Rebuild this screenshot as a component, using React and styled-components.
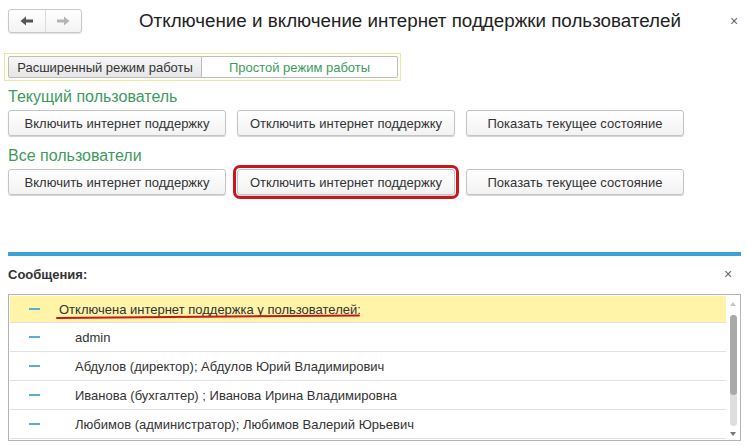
import React from 'react'
import styled, { createGlobalStyle } from 'styled-components'

const Global = createGlobalStyle`
  body {
    margin: 0;
    background: #fff;
    font-family: "Liberation Sans", Arial, sans-serif;
    color: #333;
  }
`

const Page = styled.div`
  width: 747px;
  height: 447px;
  overflow: hidden;
  padding: 0 6px 0 8px;
  box-sizing: border-box;
`

const Header = styled.div`
  display: flex;
  align-items: center;
  height: 42px;
`

const NavGroup = styled.div`
  display: flex;
  width: 74px;
  height: 24px;
  border: 1px solid #c8c8c8;
  border-radius: 3px;
  background: linear-gradient(#ffffff, #f3f3f3);
  box-shadow: 0 1px 1px rgba(0, 0, 0, 0.12);
  box-sizing: border-box;
`

const NavButton = styled.div`
  flex: 1;
  display: flex;
  align-items: center;
  justify-content: center;
  & + & {
    border-left: 1px solid #dcdcdc;
  }
`

const Title = styled.div`
  margin-left: 57px;
  font-size: 18.8px;
  color: #222;
  flex: 1;
`

const CloseX = styled.div`
  font-size: 14px;
  color: #666;
  width: 14px;
  text-align: center;
`

const TabGroup = styled.div`
  display: inline-flex;
  margin: 11px 0 0 -4px;
  padding: 2px 2px 2px 3px;
  border: 1px solid #ece7a4;
  background: #fffef4;
`

const Tab = styled.div`
  height: 22px;
  line-height: 22px;
  font-size: 13px;
  text-align: center;
  box-sizing: border-box;
  border: 1px solid #bdbdbd;
  width: ${p => p.w}px;
  color: ${p => (p.active ? '#3d9a5d' : '#333')};
  background: ${p => (p.active ? '#fff' : 'linear-gradient(#f7f7f7, #e6e6e6)')};
  border-radius: ${p => (p.active ? '0 2px 2px 0' : '2px 0 0 2px')};
  border-left-width: ${p => (p.active ? 0 : 1)}px;
`

const SectionLabel = styled.div`
  font-size: 16px;
  color: #3d9a5d;
  margin: ${p => p.top}px 0 0 0;
  line-height: 18px;
`

const ButtonRow = styled.div`
  display: flex;
  gap: 11px;
  margin-top: 4px;
`

const Button = styled.div`
  width: 218px;
  height: 26px;
  box-sizing: border-box;
  border: 1px solid #c4c4c4;
  border-radius: 3px;
  background: linear-gradient(#ffffff, #f2f2f2);
  box-shadow: 0 1px 1px rgba(0, 0, 0, 0.18);
  font-size: 13px;
  color: #333;
  display: flex;
  align-items: center;
  justify-content: center;
  outline: ${p => (p.marked ? '3px solid #c8161d' : 'none')};
  outline-offset: 1px;
`

const BlueLine = styled.div`
  height: 4px;
  background: #3aa2d6;
  margin-top: 57px;
`

const MessagesHead = styled.div`
  display: flex;
  align-items: center;
  justify-content: space-between;
  height: 20px;
  margin-top: 8px;
  padding-right: 6px;
`

const MessagesTitle = styled.div`
  font-size: 13px;
  font-weight: bold;
  color: #333;
`

const Box = styled.div`
  margin-top: 10px;
  height: 147px;
  border: 1px solid #b4b4b4;
  display: flex;
  box-sizing: border-box;
  padding: 1px 0 0 1px;
`

const List = styled.div`
  flex: 1;
`

const Row = styled.div`
  box-sizing: border-box;
  display: flex;
  align-items: center;
  border-bottom: 1px solid #e2e2e2;
  background: ${p => (p.head ? '#fff4a8' : '#fff')};
  height: ${p => (p.head ? 27 : 29)}px;
  font-size: 13px;
  color: #333;
`

const Dash = styled.span`
  width: 11px;
  height: 2px;
  background: #5aaed0;
  margin: 0 0 0 19px;
  flex: none;
`

const RowText = styled.span`
  margin-left: ${p => (p.indent ? 35 : 19)}px;
  position: relative;
  white-space: nowrap;
`

const Scribble = styled.svg`
  position: absolute;
  left: -3px;
  top: 12px;
  overflow: visible;
`

const Scrollbar = styled.div`
  width: 14px;
  display: flex;
  flex-direction: column;
  align-items: center;
  padding: 6px 0 4px;
  box-sizing: border-box;
`

const Arrow = styled.div`
  width: 0;
  height: 0;
  border-left: 3px solid transparent;
  border-right: 3px solid transparent;
  ${p =>
    p.up
      ? 'border-bottom: 4px solid #c8c8c8;'
      : 'border-top: 4px solid #777;'}
`

const Track = styled.div`
  flex: 1;
  width: 7px;
  margin: 9px 0 6px;
  border-radius: 4px;
  background: #dedede;
  display: flex;
`

const Thumb = styled.div`
  width: 7px;
  height: 80px;
  border-radius: 4px;
  background: #a9a9a9;
`

const rows = [
  'admin',
  'Абдулов (директор); Абдулов Юрий Владимирович',
  'Иванова (бухгалтер) ; Иванова Ирина Владимировна',
  'Любимов (администратор); Любимов Валерий Юрьевич',
]

const actions = ['Включить интернет поддержку', 'Отключить интернет поддержку', 'Показать текущее состояние']

const App = () => (
  <Page>
    <Global />
    <Header>
      <NavGroup>
        <NavButton>
          <svg width="14" height="10" viewBox="0 0 14 10">
            <path d="M0.5 5 L6 0.5 V3.5 H13 V6.5 H6 V9.5 Z" fill="#555" />
          </svg>
        </NavButton>
        <NavButton>
          <svg width="14" height="10" viewBox="0 0 14 10">
            <path d="M13.5 5 L8 0.5 V3.5 H1 V6.5 H8 V9.5 Z" fill="#b4b4b4" />
          </svg>
        </NavButton>
      </NavGroup>
      <Title>Отключение и включение интернет поддержки пользователей</Title>
      <CloseX>×</CloseX>
    </Header>

    <TabGroup>
      <Tab w={194}>Расширенный режим работы</Tab>
      <Tab w={196} active>Простой режим работы</Tab>
    </TabGroup>

    <SectionLabel top={7}>Текущий пользователь</SectionLabel>
    <ButtonRow>
      {actions.map(a => (
        <Button key={a}>{a}</Button>
      ))}
    </ButtonRow>

    <SectionLabel top={11}>Все пользователи</SectionLabel>
    <ButtonRow>
      {actions.map((a, i) => (
        <Button key={a} marked={i === 1}>{a}</Button>
      ))}
    </ButtonRow>

    <BlueLine />

    <MessagesHead>
      <MessagesTitle>Сообщения:</MessagesTitle>
      <CloseX>×</CloseX>
    </MessagesHead>

    <Box>
      <List>
        <Row head>
          <Dash />
          <RowText>
            Отключена интернет поддержка у пользователей:
            <Scribble width="304" height="6" viewBox="0 0 304 6">
              <path d="M1 4 C 60 3, 150 2.5, 303 1.5" stroke="#c8161d" strokeWidth="2" fill="none" strokeLinecap="round" />
            </Scribble>
          </RowText>
        </Row>
        {rows.map(r => (
          <Row key={r}>
            <Dash />
            <RowText indent>{r}</RowText>
          </Row>
        ))}
      </List>
      <Scrollbar>
        <Arrow up />
        <Track>
          <Thumb />
        </Track>
        <Arrow />
      </Scrollbar>
    </Box>
  </Page>
)

export default App
